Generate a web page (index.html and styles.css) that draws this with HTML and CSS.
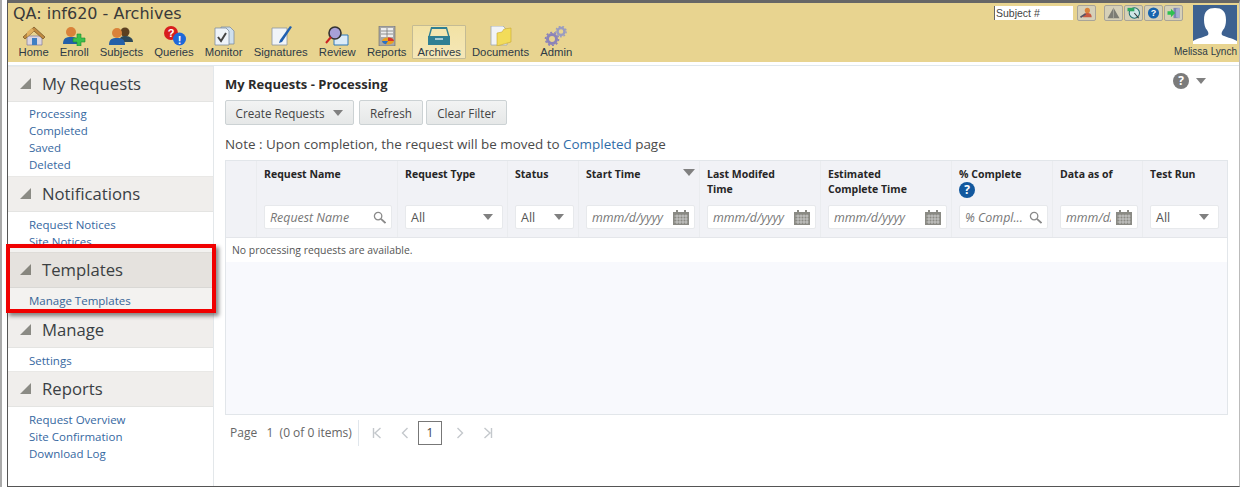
FILE: index.html
```html
<!DOCTYPE html>
<html lang="en">
<head>
<meta charset="utf-8">
<title>QA: inf620 - Archives</title>
<link rel="stylesheet" href="styles.css">
</head>
<body>
<div class="app">
  <header class="topbar">
    <div class="brand">
      <div class="app-title">QA: inf620 - Archives</div>
      <nav class="toolbar">
        <a class="tool"><svg class="tool-icon" viewBox="0 0 24 20"><path d="M5 10h15v9H5z" fill="#dcd6e0" stroke="#8a84a0" stroke-width=".8"/><path d="M1 11 12 1l11 10-2 2-9-8-9 8z" fill="#c08a40" stroke="#7b5a2c" stroke-width=".8"/><path d="M12 5 5 11V6l5-4z" fill="#e0b060"/><path d="M10 12h5v7h-5z" fill="#3f7fc4"/></svg><span>Home</span></a>
        <a class="tool"><svg class="tool-icon" viewBox="0 0 24 20"><circle cx="9" cy="6" r="5" fill="#d9823a"/><path d="M1 18c0-6 3-7 8-7s8 1 8 7z" fill="#2460a8"/><path d="M15 8h4v4h4v4h-4v4h-4v-4h-4v-4h4z" fill="#3cc04a" stroke="#1d8a30" stroke-width=".6"/></svg><span>Enroll</span></a>
        <a class="tool"><svg class="tool-icon" viewBox="0 0 24 20"><circle cx="16" cy="6" r="4.500" fill="#5c4020"/><path d="M10 16c0-5 3-6 6-6s8 1 8 6z" fill="#2d4858"/><circle cx="8" cy="7" r="5" fill="#d9823a"/><path d="M0 19c0-6 3-7 8-7s8 1 8 7z" fill="#2460a8"/></svg><span>Subjects</span></a>
        <a class="tool"><svg class="tool-icon" viewBox="0 0 24 20"><circle cx="9" cy="7" r="7" fill="#d81e1e"/><text class="glyph" x="9" y="11" text-anchor="middle" font-size="11" fill="#fff">?</text><circle cx="17.500" cy="13" r="6.500" fill="#1f68d8"/><text class="glyph" x="17.500" y="17.500" text-anchor="middle" font-size="11" fill="#fff">!</text></svg><span>Queries</span></a>
        <a class="tool"><svg class="tool-icon" viewBox="0 0 24 20"><path d="M9 1h9l4 4v13H9z" fill="#cfe0ee" stroke="#7d8d9e" stroke-width=".8"/><path d="M3 2h11l3 3v14H3z" fill="#eef3f8" stroke="#7d8d9e" stroke-width=".8"/><path d="m6 11 3 4 5-8" fill="none" stroke="#444" stroke-width="2"/></svg><span>Monitor</span></a>
        <a class="tool"><svg class="tool-icon" viewBox="0 0 24 20"><path d="M3 2h15v17H3z" fill="#f0f4f8" stroke="#8a949e" stroke-width=".8"/><path d="M21 0 23 1 13 16 10 17 11 14z" fill="#1f5fb0"/></svg><span>Signatures</span></a>
        <a class="tool"><svg class="tool-icon" viewBox="0 0 24 20"><path d="M9 9h14v10H9z" fill="#dcecf8" stroke="#2f78b8"/><circle cx="10" cy="7" r="6" fill="#a8a0d8" stroke="#333" stroke-width="1.600"/><path d="M6 11 1 17" stroke="#c22" stroke-width="2"/></svg><span>Review</span></a>
        <a class="tool"><svg class="tool-icon" viewBox="0 0 24 20"><path d="M4 0h16v20H4z" fill="#a8a8a8" stroke="#666" stroke-width=".6"/><path d="M6 2h12v9H6z" fill="#eee"/><path d="M6 5h12M6 8h12M12 2v9" stroke="#777" stroke-width=".8"/><ellipse cx="13" cy="15" rx="6" ry="3.500" fill="#e8a020"/><path d="M13 15h6a6 3.500 0 0 0-6-3.500z" fill="#d83030"/><path d="M13 15H7a6 3.500 0 0 0 4 3.200z" fill="#2a70c8"/></svg><span>Reports</span></a>
        <a class="tool tool-active"><svg class="tool-icon" viewBox="0 0 24 20"><path d="M4 1h16l3 11v7H1v-7z" fill="#2f7f93"/><path d="M5 3h14l2 7H3z" fill="#f4e6b0"/><path d="M1 10h6l1 3h8l1-3h6v9H1z" fill="#2f7f93"/><path d="M8 13h8" stroke="#cfe4ea" stroke-width="1.500"/></svg><span>Archives</span></a>
        <a class="tool"><svg class="tool-icon" viewBox="0 0 24 20"><path d="M2 0h12l4 4v15H2z" fill="#f2f4f6" stroke="#a0a8b0" stroke-width=".8"/><path d="M8 7l5-1 2-3 7-1v14L8 20z" fill="#f2dc5a" stroke="#c8a830" stroke-width=".6"/></svg><span>Documents</span></a>
        <a class="tool"><svg class="tool-icon" viewBox="0 0 24 20"><circle cx="8" cy="13" r="4.500" fill="none" stroke="#8c84b8" stroke-width="3"/><circle cx="8" cy="13" r="6.500" fill="none" stroke="#8c84b8" stroke-width="1.600" stroke-dasharray="2 2"/><circle cx="17" cy="5.500" r="3.500" fill="none" stroke="#9a9cc0" stroke-width="2.500"/><circle cx="17" cy="5.500" r="5.200" fill="none" stroke="#9a9cc0" stroke-width="1.400" stroke-dasharray="1.800 1.800"/></svg><span>Admin</span></a>
      </nav>
    </div>
    <div class="user-area">
      <div class="user-tools">
        <input class="subject-input" type="text" value="Subject #" aria-label="Subject number">
        <button class="icon-btn icon-btn-first"><svg viewBox="0 0 16 14"><circle cx="9" cy="4" r="3" fill="#d9823a"/><path d="M4 12c0-4 2-5 5-5s5 1 5 5z" fill="#c85a40"/><path d="M1 12 7 8" stroke="#556" stroke-width="2"/></svg></button>
        <div class="icon-group">
          <button class="icon-btn"><svg viewBox="0 0 16 14"><path d="M8 1 15 13H1z" fill="#7c7c74"/><path d="M8 1v12" stroke="#a6a69c"/></svg></button>
          <button class="icon-btn"><svg viewBox="0 0 16 14"><circle cx="9" cy="7" r="6" fill="#cfe6e6" stroke="#1d6d6d" stroke-width="1.200"/><path d="M1 1h8v4H1z" fill="#2fa860"/><path d="m9 7 5 6" stroke="#333" stroke-width="1.200"/></svg></button>
          <button class="icon-btn"><svg viewBox="0 0 16 14"><circle cx="8" cy="7" r="6.500" fill="#1764ae"/><text class="glyph" x="8" y="11" text-anchor="middle" font-size="10.500" fill="#fff">?</text></svg></button>
          <button class="icon-btn"><svg viewBox="0 0 16 14"><path d="M8 1h7v12H8z" fill="#7c86b0"/><path d="M11 2l4-1v12l-4-1z" fill="#a4acd0"/><path d="M1 5h4V2l5 5-5 5V9H1z" fill="#2ec050"/></svg></button>
        </div>
        <svg class="avatar" viewBox="0 0 44 39"><rect width="44" height="39" fill="#3d6190"/><path d="M0 39v-3c5-3 12-4 15-6 1-2 0-3-1-5-2-2-3-6-3-10C11 6 15 3 22 3s11 3 11 12c0 4-1 8-3 10-1 2-2 3-1 5 3 2 10 3 15 6v3z" fill="#fff"/></svg>
      </div>
      <div class="user-name">Melissa Lynch</div>
    </div>
  </header>

  <div class="workspace">
    <aside class="sidebar">
      <section class="side-section">
        <h2 class="side-head"><span class="side-tri"></span>My Requests</h2>
        <ul class="side-links"><li>Processing</li><li>Completed</li><li>Saved</li><li>Deleted</li></ul>
      </section>
      <section class="side-section">
        <h2 class="side-head"><span class="side-tri"></span>Notifications</h2>
        <ul class="side-links"><li>Request Notices</li><li>Site Notices</li></ul>
      </section>
      <section class="side-section side-templates">
        <h2 class="side-head"><span class="side-tri"></span>Templates</h2>
        <ul class="side-links"><li>Manage Templates</li></ul>
      </section>
      <section class="side-section">
        <h2 class="side-head"><span class="side-tri"></span>Manage</h2>
        <ul class="side-links"><li>Settings</li></ul>
      </section>
      <section class="side-section">
        <h2 class="side-head"><span class="side-tri"></span>Reports</h2>
        <ul class="side-links"><li>Request Overview</li><li>Site Confirmation</li><li>Download Log</li></ul>
      </section>
      <div class="callout"></div>
    </aside>

    <main class="content">
      <div class="title-row">
        <h1 class="page-title">My Requests - Processing</h1>
        <div class="help-menu"><span class="help-dot">?</span><span class="caret"></span></div>
      </div>
      <div class="actions">
        <button class="btn btn-create">Create Requests<span class="caret"></span></button>
        <button class="btn btn-refresh">Refresh</button>
        <button class="btn btn-clear">Clear Filter</button>
      </div>
      <p class="note">Note : Upon completion, the request will be moved to <a class="note-link">Completed</a> page</p>

      <div class="grid-panel">
        <div class="grid-head">
          <div class="col"></div>
          <div class="col"><div class="col-label">Request Name</div>
            <div class="filter"><span class="ph">Request Name</span><svg class="filter-icon" viewBox="0 0 14 14"><circle cx="5.500" cy="5.500" r="4" fill="none" stroke="#8a8a8a" stroke-width="1.400"/><path d="m8.500 8.500 5 4.500" stroke="#8a8a8a" stroke-width="2"/></svg></div></div>
          <div class="col"><div class="col-label">Request Type</div>
            <div class="filter"><span class="val">All</span><span class="caret"></span></div></div>
          <div class="col"><div class="col-label">Status</div>
            <div class="filter"><span class="val">All</span><span class="caret"></span></div></div>
          <div class="col"><div class="col-label col-sort">Start Time<span class="caret caret-sort"></span></div>
            <div class="filter"><span class="ph">mmm/d/yyyy</span><svg class="filter-icon cal" viewBox="0 0 16 15"><path d="M0 2h16v13H0z" fill="#8a8a84"/><path d="M3 0h2v3H3zM11 0h2v3h-2z" fill="#8a8a84"/><path d="M1.500 6h13M1.500 9h13M1.500 12h13M4 4.500V14M7 4.500V14M10 4.500V14M13 4.500V14" stroke="#ddd" stroke-width=".7"/></svg></div></div>
          <div class="col"><div class="col-label">Last Modifed<br>Time</div>
            <div class="filter"><span class="ph">mmm/d/yyyy</span><svg class="filter-icon cal" viewBox="0 0 16 15"><path d="M0 2h16v13H0z" fill="#8a8a84"/><path d="M3 0h2v3H3zM11 0h2v3h-2z" fill="#8a8a84"/><path d="M1.500 6h13M1.500 9h13M1.500 12h13M4 4.500V14M7 4.500V14M10 4.500V14M13 4.500V14" stroke="#ddd" stroke-width=".7"/></svg></div></div>
          <div class="col"><div class="col-label">Estimated<br>Complete Time</div>
            <div class="filter"><span class="ph">mmm/d/yyyy</span><svg class="filter-icon cal" viewBox="0 0 16 15"><path d="M0 2h16v13H0z" fill="#8a8a84"/><path d="M3 0h2v3H3zM11 0h2v3h-2z" fill="#8a8a84"/><path d="M1.500 6h13M1.500 9h13M1.500 12h13M4 4.500V14M7 4.500V14M10 4.500V14M13 4.500V14" stroke="#ddd" stroke-width=".7"/></svg></div></div>
          <div class="col"><div class="col-label">% Complete <span class="col-help">?</span></div>
            <div class="filter"><span class="ph">% Compl...</span><svg class="filter-icon" viewBox="0 0 14 14"><circle cx="5.500" cy="5.500" r="4" fill="none" stroke="#8a8a8a" stroke-width="1.400"/><path d="m8.500 8.500 5 4.500" stroke="#8a8a8a" stroke-width="2"/></svg></div></div>
          <div class="col"><div class="col-label">Data as of</div>
            <div class="filter"><span class="ph">mmm/d/yyyy</span><svg class="filter-icon cal" viewBox="0 0 16 15"><path d="M0 2h16v13H0z" fill="#8a8a84"/><path d="M3 0h2v3H3zM11 0h2v3h-2z" fill="#8a8a84"/><path d="M1.500 6h13M1.500 9h13M1.500 12h13M4 4.500V14M7 4.500V14M10 4.500V14M13 4.500V14" stroke="#ddd" stroke-width=".7"/></svg></div></div>
          <div class="col"><div class="col-label">Test Run</div>
            <div class="filter"><span class="val">All</span><span class="caret"></span></div></div>
        </div>
        <div class="grid-empty">No processing requests are available.</div>
        <div class="grid-rest"></div>
      </div>

      <div class="pager">
        <span class="pager-info">Page&nbsp;&nbsp; 1&nbsp; (0 of 0 items)</span>
        <svg class="pg" viewBox="0 0 10 12"><path d="M1.500 1v10M8.500 1 3 6l5.500 5" fill="none" stroke="#c4c8cc" stroke-width="1.400"/></svg>
        <svg class="pg" viewBox="0 0 10 12"><path d="M7.500 1 2.500 6l5 5" fill="none" stroke="#c4c8cc" stroke-width="1.400"/></svg>
        <span class="pg-current">1</span>
        <svg class="pg" viewBox="0 0 10 12"><path d="m2.500 1 5 5-5 5" fill="none" stroke="#c4c8cc" stroke-width="1.400"/></svg>
        <svg class="pg" viewBox="0 0 10 12"><path d="M8.500 1v10M1.500 1 7 6l-5.500 5" fill="none" stroke="#c4c8cc" stroke-width="1.400"/></svg>
      </div>
    </main>
  </div>
</div>
</body>
</html>
```

FILE: styles.css
```css
* { box-sizing: border-box; }
html, body { margin: 0; height: 100%; }
body {
  background: #fff;
  border-left: 2px solid #aaa;
  font-family: "Open Sans", "Noto Sans", sans-serif;
  color: #333;
  overflow: hidden;
}
.app {
  margin-left: 5px;
  height: 487px;
  border-left: 1px solid #555;
  border-top: 3px solid #666;
  border-bottom: 1px solid #555;
  border-right: 1px solid #bbb;
  display: flex;
  flex-direction: column;
}
.topbar {
  height: 59px;
  background: #e8d490;
  display: flex;
  justify-content: space-between;
  flex: none;
}
.brand { padding: 1px 0 0 5px; }
.app-title {
  font-family: "DejaVu Sans", sans-serif;
  font-size: 16px;
  line-height: 19px;
  color: #3a3a3a;
}
.toolbar { display: flex; margin-top: 2px; }
.tool {
  padding: 0 4.550px;
  height: 34px;
  display: flex;
  flex-direction: column;
  align-items: center;
  border: 1px solid transparent;
  font-family: "Liberation Sans", sans-serif;
  font-size: 11.300px;
  line-height: 13px;
  color: #2d3a46;
  white-space: nowrap;
}
.tool-active {
  background: linear-gradient(#f2e2a4, #f5e7b8);
  border-color: #c4bb94;
  border-radius: 1px;
}
.tool-icon { width: 24px; height: 20px; display: block; flex: none; }
.user-area { width: 245px; padding: 2px 2px 0 0; display: flex; flex-direction: column; align-items: flex-end; }
.user-tools { display: flex; width: 100%; align-items: flex-start; }
.subject-input {
  width: 79px;
  height: 14px;
  margin: 1px 4px 0 0;
  padding: 0 1px;
  border: 0;
  border-left: 1px solid #666;
  background: #fff;
  font-family: "Liberation Sans", sans-serif;
  font-size: 10.500px;
  color: #444;
}
.icon-btn {
  width: 19px;
  height: 16px;
  padding: 1px;
  background: #d6d0b8;
  border: 1px solid #a8a498;
  border-radius: 2px;
  display: block;
}
.icon-btn svg { width: 100%; height: 100%; display: block; }
.icon-btn-first { margin-right: 8px; }
.icon-group { display: flex; gap: 1px; margin-right: 10px; }
.avatar { width: 44px; height: 39px; display: block; }
.user-name {
  margin-top: 1px;
  font-family: "Liberation Sans", sans-serif;
  font-size: 10px;
  line-height: 14px;
  color: #2d3a46;
}
.workspace {
  flex: 1;
  display: flex;
  margin-top: 3px;
  border-top: 1px solid #dfe8ee;
  min-height: 0;
}
.sidebar {
  position: relative;
  width: 206px;
  flex: none;
  border-right: 1px solid #e3e7ea;
}
.side-section { padding-bottom: 2px; }
.side-section:first-child { padding-bottom: 3px; }
.side-section:first-child .side-links { padding-top: 3px; }
.side-templates { padding-bottom: 3px; }
.side-head {
  margin: 0;
  height: 36px;
  display: flex;
  align-items: center;
  padding: 0 0 2px 12px;
  background: #f0eeec;
  border-top: 1px solid #e9e8e6;
  border-bottom: 1px solid #e4e4e2;
  font-size: 16.700px;
  font-weight: 400;
  color: #3a3f44;
}
.side-tri {
  width: 0; height: 0;
  margin-right: 11px;
  border-style: solid;
  border-width: 0 0 11px 11px;
  border-color: transparent transparent #8b8b85 transparent;
}
.side-links {
  list-style: none;
  margin: 0;
  padding: 4px 0 0 21px;
  font-size: 11.500px;
  line-height: 17px;
  color: #36689f;
}
.callout {
  position: absolute;
  left: -2px;
  top: 178px;
  width: 210px;
  height: 69px;
  border: 4px solid #f00000;
  background: rgba(90, 70, 40, .07);
  box-shadow: 3px 3px 4px rgba(0, 0, 0, .45);
}
.content {
  flex: 1;
  min-width: 0;
  padding: 1px 11px 0 11px;
}
.title-row {
  display: flex;
  justify-content: space-between;
  align-items: center;
  height: 33px;
  padding-right: 22px;
}
.page-title { margin: 0; font-size: 13px; font-weight: 700; color: #2b2b2b; }
.help-menu { display: flex; align-items: center; gap: 7px; margin-top: -5px; }
.help-dot {
  width: 16px; height: 16px;
  border-radius: 50%;
  background: #7b7b7b;
  color: #fff;
  font-size: 12px;
  font-weight: 700;
  line-height: 16px;
  text-align: center;
}
.caret {
  display: inline-block;
  width: 0; height: 0;
  border-left: 5px solid transparent;
  border-right: 5px solid transparent;
  border-top: 6px solid #808080;
}
.actions { display: flex; gap: 3px; }
.btn {
  height: 25px;
  padding: 0;
  background: linear-gradient(#f2f3f3, #e6e8e8);
  border: 1px solid #ccd2d4;
  border-radius: 2px;
  font-family: inherit;
  font-size: 11.700px;
  color: #444;
}
.btn-create { width: 129px; }
.btn-create .caret { margin-left: 9px; vertical-align: 2px; }
.btn-refresh { width: 64px; margin-left: 2px; }
.btn-clear { width: 81px; }
.note { margin: 10px 0 0; font-size: 13.430px; line-height: 18px; color: #4a4a4a; }
.note-link { color: #2f6ca8; }
.grid-panel {
  margin-top: 7px;
  width: 1003px;
  height: 255px;
  border: 1px solid #e2e6ea;
  display: flex;
  flex-direction: column;
  background: #f8f9fd;
}
.grid-head {
  display: grid;
  grid-template-columns: 31px 141px 110px 71px 121px 121px 131px 101px 90px 1fr;
  height: 77px;
  background: #f1f2f6;
  border-bottom: 1px solid #e4e6ea;
  flex: none;
}
.col {
  position: relative;
  padding: 6px 4px 0 7px;
  border-right: 1px solid #eaecef;
  display: flex;
  flex-direction: column;
}
.col:nth-child(2) { padding-right: 5px; }
.col:last-child { border-right: 0; padding-right: 8px; }
.col-label {
  font-size: 10.500px;
  font-weight: 700;
  line-height: 15px;
  height: 30px;
  color: #262626;
}
.col-sort { display: flex; justify-content: space-between; }
.caret-sort { border-left-width: 6px; border-right-width: 6px; border-top-width: 7px; margin-top: 2px; }
.col-help {
  display: block;
  width: 16px; height: 16px;
  border-radius: 50%;
  background: #12589e;
  color: #fff;
  text-align: center;
  line-height: 16px;
  font-size: 12px;
}
.filter {
  margin-top: 8px;
  height: 24px;
  background: #fff;
  border: 1px solid #e7e9ec;
  border-radius: 2px;
  display: flex;
  align-items: center;
  justify-content: space-between;
  padding: 0 9px 0 5px;
  overflow: hidden;
}
.ph {
  font-size: 12.400px;
  font-style: italic;
  color: #777;
  white-space: nowrap;
  overflow: hidden;
  flex: 1;
  min-width: 0;
  margin-right: 5px;
}
.val { font-size: 12.500px; color: #555; }
.filter-icon { width: 13px; height: 13px; flex: none; margin-right: -4px; }
.filter-icon.cal { width: 16px; height: 15px; margin-right: -4px; }
.grid-empty {
  height: 24px;
  background: #fff;
  padding-left: 6px;
  font-size: 10.400px;
  line-height: 24px;
  color: #555;
  flex: none;
}
.grid-rest { flex: 1; }
.pager {
  display: flex;
  align-items: center;
  height: 26px;
  margin-top: 5px;
  padding-left: 5px;
  font-size: 12px;
  color: #666;
}
.pager-info { width: 129px; height: 26px; line-height: 26px; border-right: 1px solid #e0e6ec; margin-right: 13px; white-space: nowrap; }
.pg { width: 10px; height: 12px; flex: none; margin-right: 18px; }
.pg-current {
  width: 24px; height: 24px;
  margin-right: 13px;
  margin-left: -10px;
  border: 1px solid #777;
  text-align: center;
  line-height: 22px;
  color: #444;
}
.glyph { font-family: "Liberation Sans", sans-serif; font-weight: 700; }
```
